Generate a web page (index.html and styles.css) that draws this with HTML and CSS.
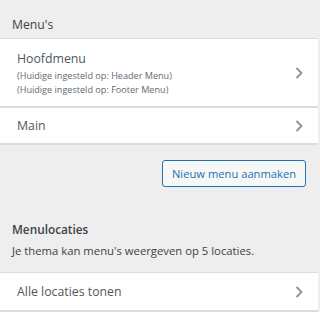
FILE: index.html
```html
<!DOCTYPE html>
<html>
<head>
<meta charset="utf-8">
<link rel="stylesheet" href="styles.css">
</head>
<body>
<div class="panel">
  <div class="section-head">Menu's</div>
  <ul class="list">
    <li class="item">
      <div class="item-text">
        <div class="item-title">Hoofdmenu</div>
        <div class="item-sub">(Huidige ingesteld op: Header Menu)</div>
        <div class="item-sub">(Huidige ingesteld op: Footer Menu)</div>
      </div>
      <svg class="chev" width="8" height="12" viewBox="0 0 8 12"><path d="M1.5 1 L6.5 6 L1.5 11" fill="none" stroke="#8c8f94" stroke-width="1.8"/></svg>
    </li>
    <li class="item item-single">
      <div class="item-text">
        <div class="item-title">Main</div>
      </div>
      <svg class="chev" width="8" height="12" viewBox="0 0 8 12"><path d="M1.5 1 L6.5 6 L1.5 11" fill="none" stroke="#8c8f94" stroke-width="1.8"/></svg>
    </li>
  </ul>
  <div class="actions">
    <button class="btn">Nieuw menu aanmaken</button>
  </div>
  <div class="loc-head">Menulocaties</div>
  <div class="loc-desc">Je thema kan menu's weergeven op 5 locaties.</div>
  <ul class="list loc-list">
    <li class="item item-single">
      <div class="item-text">
        <div class="item-title">Alle locaties tonen</div>
      </div>
      <svg class="chev" width="8" height="12" viewBox="0 0 8 12"><path d="M1.5 1 L6.5 6 L1.5 11" fill="none" stroke="#8c8f94" stroke-width="1.8"/></svg>
    </li>
  </ul>
</div>
</body>
</html>
```
FILE: styles.css
```css
html, body {
  margin: 0;
  padding: 0;
  background: #eeeeee;
}
body {
  font-family: "Open Sans", "Noto Sans", sans-serif;
  color: #555d66;
  width: 318px;
  height: 312px;
  overflow: hidden;
}
.panel {
  display: flex;
  flex-direction: column;
}
.section-head {
  height: 39px;
  box-sizing: border-box;
  padding: 16px 12px 0;
  font-size: 12.2px;
  line-height: 18px;
  color: #3c434a;
  font-weight: 500;
  border-bottom: 1px solid #dcdcde;
}
.list {
  list-style: none;
  margin: 0;
  padding: 0;
}
.item {
  display: flex;
  align-items: center;
  justify-content: space-between;
  background: #fff;
  border-bottom: 2px solid #dcdcde;
  padding: 10px 15px 9px 17px;
}
.item-single {
  height: 37px;
  box-sizing: border-box;
  padding-top: 0;
  padding-bottom: 0;
}
.item-title {
  font-size: 12.3px;
  line-height: 20px;
  color: #50575e;
  font-weight: 500;
}
.item-sub {
  font-size: 9.1px;
  line-height: 14px;
  color: #646970;
}
.chev {
  flex: none;
}
.actions {
  display: flex;
  justify-content: flex-end;
  padding: 15px 12px 0;
}
.btn {
  font-family: inherit;
  font-size: 11.2px;
  color: #2271b1;
  background: #f6f7f7;
  border: 1px solid #2271b1;
  border-radius: 3px;
  height: 27px;
  width: 144px;
  padding: 0;
  cursor: pointer;
}
.loc-head {
  padding: 33px 12px 0;
  font-size: 11.8px;
  line-height: 18px;
  color: #3c434a;
  font-weight: 600;
}
.loc-desc {
  padding: 4px 12px 0;
  font-size: 11.3px;
  line-height: 18px;
  color: #3c434a;
  height: 30px;
}
.loc-list .item {
  border-top: 1px solid #dcdcde;
  height: 40px;
}
```
